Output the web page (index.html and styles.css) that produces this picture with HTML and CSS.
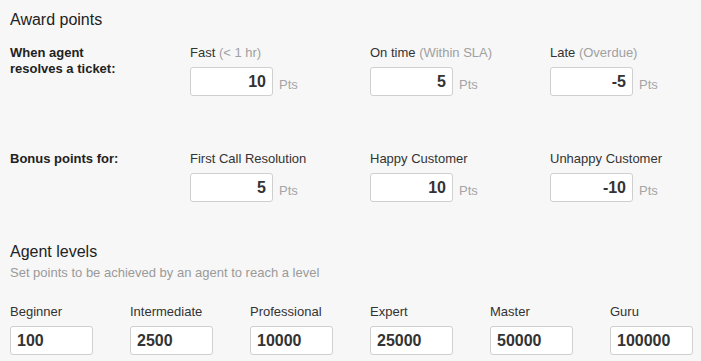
FILE: index.html
```html
<!DOCTYPE html>
<html lang="en">
<head>
    <meta charset="UTF-8">
    <meta name="viewport" content="width=device-width, initial-scale=1.0">
    <title>Gamification settings</title>
    <link rel="stylesheet" href="styles.css">
</head>
<body>
<div class="page">
    <section class="award">
        <h2 class="section-title">Award points</h2>

        <div class="row">
            <div class="row-title">When agent<br>resolves a ticket:</div>
            <div class="field">
                <label>Fast <span class="hint">(&lt; 1 hr)</span></label>
                <div class="points">
                    <input type="text" class="pts-input" value="10">
                    <span class="unit">Pts</span>
                </div>
            </div>
            <div class="field">
                <label>On time <span class="hint">(Within SLA)</span></label>
                <div class="points">
                    <input type="text" class="pts-input" value="5">
                    <span class="unit">Pts</span>
                </div>
            </div>
            <div class="field">
                <label>Late <span class="hint">(Overdue)</span></label>
                <div class="points">
                    <input type="text" class="pts-input" value="-5">
                    <span class="unit">Pts</span>
                </div>
            </div>
        </div>

        <div class="row bonus">
            <div class="row-title">Bonus points for:</div>
            <div class="field">
                <label>First Call Resolution</label>
                <div class="points">
                    <input type="text" class="pts-input" value="5">
                    <span class="unit">Pts</span>
                </div>
            </div>
            <div class="field">
                <label>Happy Customer</label>
                <div class="points">
                    <input type="text" class="pts-input" value="10">
                    <span class="unit">Pts</span>
                </div>
            </div>
            <div class="field">
                <label>Unhappy Customer</label>
                <div class="points">
                    <input type="text" class="pts-input" value="-10">
                    <span class="unit">Pts</span>
                </div>
            </div>
        </div>
    </section>

    <section class="levels">
        <h2 class="section-title">Agent levels</h2>
        <p class="subtitle">Set points to be achieved by an agent to reach a level</p>
        <div class="level-grid">
            <div class="field">
                <label>Beginner</label>
                <input type="text" class="level-input" value="100">
            </div>
            <div class="field">
                <label>Intermediate</label>
                <input type="text" class="level-input" value="2500">
            </div>
            <div class="field">
                <label>Professional</label>
                <input type="text" class="level-input" value="10000">
            </div>
            <div class="field">
                <label>Expert</label>
                <input type="text" class="level-input" value="25000">
            </div>
            <div class="field">
                <label>Master</label>
                <input type="text" class="level-input" value="50000">
            </div>
            <div class="field">
                <label>Guru</label>
                <input type="text" class="level-input" value="100000">
            </div>
        </div>
    </section>
</div>
</body>
</html>
```

FILE: styles.css
```css
body {
    margin: 0;
    background-color: #f7f7f7;
    font-family: "Liberation Sans", Arial, sans-serif;
    font-size: 13px;
    line-height: 16px;
    color: #333;
}
.page {
    padding: 10px 10px 0;
}
.section-title {
    margin: 0;
    font-size: 16px;
    line-height: 20px;
    font-weight: normal;
    color: #222;
}
.row {
    display: grid;
    grid-template-columns: 180px 180px 180px 180px;
    margin-top: 15px;
}
.row.bonus {
    margin-top: 55px;
}
.row-title {
    font-weight: bold;
    color: #222;
}
.field label {
    display: block;
    margin-bottom: 6px;
    white-space: nowrap;
}
.hint {
    color: #a0a0a0;
}
.points {
    display: flex;
    align-items: flex-end;
    gap: 6px;
}
.unit {
    color: #a5a5a5;
    padding-bottom: 3px;
}
input {
    box-sizing: border-box;
    width: 83px;
    height: 29px;
    margin: 0;
    padding: 1px 6px 0;
    border: 1px solid #cfcfcf;
    border-radius: 3px;
    background: #fff;
    font-family: "Liberation Sans", Arial, sans-serif;
    font-size: 16px;
    font-weight: bold;
    color: #333;
    outline: none;
}
.pts-input {
    text-align: right;
}
.levels {
    margin-top: 40px;
}
.subtitle {
    margin: 3px 0 0;
    color: #9a9a9a;
}
.level-grid {
    display: grid;
    grid-template-columns: repeat(6, 120px);
    margin-top: 23px;
}
```
